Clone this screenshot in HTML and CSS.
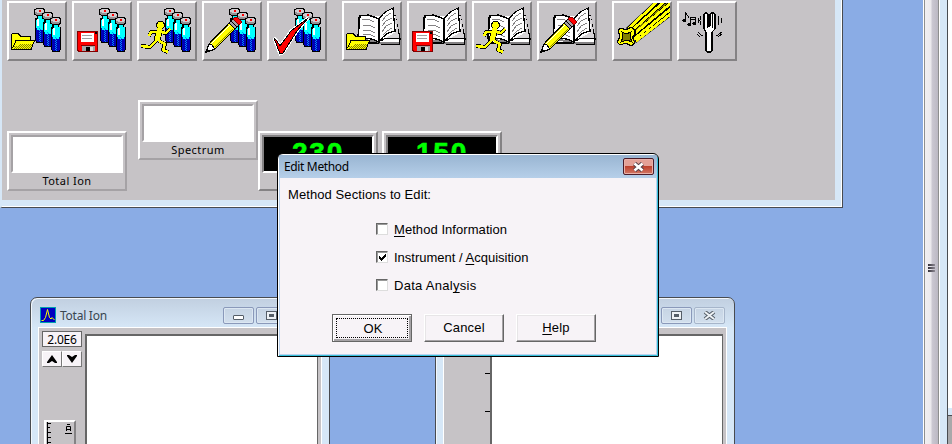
FILE: index.html
```html
<!DOCTYPE html>
<html lang="en">
<head>
<meta charset="utf-8">
<title>Edit Method</title>
<link rel="stylesheet" href="styles.css">
</head>
<body>
<svg class="defs" width="0" height="0" aria-hidden="true">
  <defs>
    <pattern id="dither" width="2" height="2" patternUnits="userSpaceOnUse"><rect width="2" height="2" fill="#ff0"/><rect width="1" height="1" fill="#848200"/><rect x="1" y="1" width="1" height="1" fill="#848200"/></pattern>
    <g id="vial">
      <path d="M3 8H9V10H11V33H10V35H2V33H1V10H3Z" fill="#000"/>
      <path d="M2 12H10V33H9V34H3V33H2Z" fill="#0000b8"/>
      <path d="M4 8H8V10H10V20H9V22H3V20H2V12H4Z" fill="#0ff"/>
      <path d="M3 11H5V18H3Z" fill="#fff"/>
      <path d="M5.500 20V33M6.500 21V34" fill="none" stroke="#08f" stroke-width="1" stroke-dasharray="1 1"/>
      <path d="M2 0H10V1H11V7H10V8H2V7H0V1H2Z" fill="#000"/>
      <path d="M2 1H9V2H10V6H9V7H2V6H1V2H2Z" fill="#949294"/>
      <path d="M3 1H9V2H10V4H9V5H3V4H1V2H3Z" fill="#d0cdd0"/>
      <rect x="5" y="2" width="2" height="2" fill="#f00"/>
    </g>
    <g id="vials"><use href="#vial" x="27" y="7"/><use href="#vial" x="35" y="11"/><use href="#vial" x="43" y="16"/></g>
    <g id="book">
      <path d="M17 16L16 36L17 42H37L40 43H57L58 38L53 14" fill="#fff" stroke="#000" stroke-width="1.300"/>
      <path d="M18 39L34 40L38 42H57" fill="none" stroke="#848284" stroke-width="2"/>
      <path d="M18 15L26 14L32 16L37 18V41L30 38L16 37Z" fill="#fff" stroke="#000" stroke-width="1.300"/>
      <path d="M37 18L41 13L45 10L51 7L53 30L46 32L41 36L37 41Z" fill="#fff" stroke="#000" stroke-width="1.300"/>
      <path d="M53 15H54L57 37L42 38L54 31Z" fill="#d6d3d6"/>
      <path d="M57 37L42 38L39 40" fill="none" stroke="#000"/>
      <path d="M20 19L26 18L32 21M21 24L27 24L33 27M21 29L27 29L33 32M21 33L27 33L33 36M40 20L44 15L49 12M40 25L44 20L50 17M40 31L44 25L50 22M41 34L45 30L50 27" fill="none" stroke="#848284"/>
    </g>
    <g id="folder">
      <path d="M4.500 48.500V33.500L6 32.500H11L14 35.500H23.500V39.500H27.500L24 48.500Z" fill="#ff0" stroke="#000"/>
      <path d="M9 39.500H27L24 48.500H6Z" fill="url(#dither)"/>
      <path d="M9 39H27L26 43H14L8 46Z" fill="#ff0"/>
      <path d="M5.500 47L9 39.500H27.500L24 48.500H5" fill="none" stroke="#000"/>
    </g>
    <g id="floppy">
      <path d="M5.500 30.500H25.500V50.500H7L5.500 49Z" fill="#f00" stroke="#800000"/>
      <rect x="9" y="32" width="13" height="9" fill="#fff"/><path d="M10 34.500H20M10 37.500H20" stroke="#a0a0a0"/>
      <rect x="10" y="45" width="13" height="5" fill="#a5a2a5"/><rect x="14" y="46" width="4" height="4" fill="#000"/><rect x="18" y="46" width="3" height="4" fill="#ddd"/>
      <rect x="23" y="31" width="2" height="2" fill="#000"/><path d="M9 44.500H23" stroke="#800000"/>
    </g>
    <g id="runner" fill="none" stroke-linejoin="round">
      <g stroke="#000" stroke-width="4"><path d="M22 30L20 40" stroke-width="7"/><path d="M20 31L14 31L12 35M24 31L29 32L33 28M20 39L13 46L4 45M22 40L28 43L26 49L31 51"/><circle cx="23.500" cy="24" r="2.500"/></g>
      <g stroke="#ff0" stroke-width="2.500"><path d="M22 27V31L20 40" stroke-width="5"/><path d="M20 31L14 31L12 35M24 31L29 32L33 28M20 39L13 46L4 45M22 40L28 43L26 49L31 51"/><circle cx="23.500" cy="24" r="2" fill="#ff0" stroke-width="2.500"/></g>
    </g>
    <g id="pencil">
      <path d="M4 51L7 43L27 22L33 28L13 48Z" fill="#ff0" stroke="#000" stroke-width="1.300"/>
      <path d="M4 51L7 43L9 43L13 48Z" fill="#fff" stroke="#000"/>
      <path d="M4 51L5 48L8 50Z" fill="#000"/>
      <path d="M13 46L31 28" stroke="#848200" stroke-width="1"/><path d="M9 43L28 24" stroke="#fff"/>
      <path d="M27 22L31 18L37 24L33 28Z" fill="#a5a2a5" stroke="#000"/><path d="M29 20L35 26" stroke="#000"/>
      <path d="M31 18L33 16H35L39 20V22L37 24Z" fill="#f00" stroke="#800000"/>
    </g>
    <g id="check"><path d="M7 37L10 40L13 45L24 30L41 17L30 30L16 52L13 53Z" fill="#f00" stroke="#fff" stroke-width="3"/><path d="M7 37L10 40L13 45L24 30L41 17L30 30L16 52L13 53Z" fill="#f00" stroke="#000"/></g>
    <clipPath id="rodclip"><path d="M14 27L41 2H58V16L24 42Z"/></clipPath>
    <g id="rods">
      <g clip-path="url(#rodclip)">
        <rect width="60" height="60" fill="#000"/>
        <g stroke="#ff0" stroke-width="2.800" fill="none"><path d="M16 28L46 0M17 32L54 -1M20 34.500L60 1M22 38L60 7M24 40L60 12"/></g>
        <path d="M18 34L56 1" stroke="#848200"/>
      </g>
      <path d="M6 29L9 27L14 29L19 26L23 29V33L20 36L23 42L19 45L14 42L8 44L5 41L8 36Z" fill="#ff0" stroke="#000" stroke-width="1.200"/>
      <path d="M10 31L14 33L19 31L18 36L20 41L15 39L9 41L11 36Z" fill="#848200" stroke="#000"/>
    </g>
    <g id="fork">
      <path d="M28 13L29 12H31L32 13V25L33 26L34 25V13L35 12H38L39 13V28L36 31V50L35 51H31L30 50V31L28 28Z" fill="#fff" stroke="#000" stroke-width="1.300"/>
      <path d="M31 13V27M36 13V27" stroke="#000"/>
      <path d="M25 15Q23 20 25 24M22 17V22M42 15Q44 20 42 24M45 17V22M22 31L25 34H27M21 33L24 36M46 31L42 34H40M46 33L42 36" stroke="#000" fill="none"/>
      <path d="M9.500 19V12L12 15V17M14.500 23V16.500H19.500V22M14.500 18H19" stroke="#000" fill="none"/>
      <ellipse cx="8.500" cy="19.500" rx="2" ry="1.500"/><ellipse cx="13.500" cy="23.500" rx="2" ry="1.500"/><ellipse cx="18.500" cy="22.500" rx="2" ry="1.500"/>
    </g>
  </defs>
</svg>
<div class="desktop">
  <section class="main-window">
    <div class="toolbar">
      <button class="tool"><svg><use href="#vials"/><use href="#folder"/></svg></button>
      <button class="tool"><svg><use href="#vials"/><use href="#floppy"/></svg></button>
      <button class="tool"><svg><use href="#vials"/><use href="#runner"/></svg></button>
      <button class="tool"><svg><use href="#vials"/><use href="#pencil"/></svg></button>
      <button class="tool"><svg><use href="#vials"/><use href="#check"/></svg></button>
      <button class="tool apart"><svg><use href="#book"/><use href="#folder"/></svg></button>
      <button class="tool"><svg><use href="#book"/><use href="#floppy"/></svg></button>
      <button class="tool"><svg><use href="#book"/><use href="#runner"/></svg></button>
      <button class="tool"><svg><use href="#book"/><use href="#pencil"/></svg></button>
      <button class="tool apart"><svg><use href="#rods"/></svg></button>
      <button class="tool"><svg><use href="#fork" x="-1"/></svg></button>
    </div>
    <div class="panels">
      <div class="panel low"><div class="screen"></div><span>Total Ion</span></div>
      <div class="panel spectrum"><div class="screen"></div><span>Spectrum</span></div>
      <div class="panel meter low"><div class="screen">230</div></div>
      <div class="panel meter low second"><div class="screen">150</div></div>
    </div>
  </section>

  <section class="child ion">
    <header class="child-title">
      <svg class="app-icon" width="16" height="16"><rect x=".5" y=".5" width="15" height="15" fill="#0000c0" stroke="#00a0b0"/><path d="M1.500 13.500H3.500L5.500 10.500L7.500 2.500L9.500 10.500L11 12L12 10.500L14.500 13" fill="none" stroke="#ff0"/></svg>
      <span class="name">Total Ion</span>
      <span class="cap"><i class="min"></i></span><span class="cap"><i class="max"></i></span><span class="cap"></span>
    </header>
    <div class="child-body">
      <aside class="side">
        <div class="scale">2.0E6</div>
        <div class="arrows">
          <button><svg width="12" height="8"><path d="M6 0L11 7V8H9L6 6L3 8H1V7Z"/></svg></button>
          <button><svg width="12" height="8"><path d="M6 8L1 1V0H3L6 2L9 0H11V1Z"/></svg></button>
        </div>
        <div class="gauge"><svg width="28" height="24"><path d="M1.500 0V24M2 1.500H5M2 5.500H4M2 10.500H5M2 15.500H5M2 20.500H5" fill="none" stroke="#000"/><path d="M20.500 9V4.500H24.500V9M19 11.500H26M20 7.500H25M21 2.500H24" fill="none" stroke="#000"/></svg></div>
      </aside>
      <div class="plot"></div>
    </div>
  </section>

  <section class="child spec">
    <header class="child-title"><span class="name"></span><span class="cap"><i class="max"></i></span><span class="cap closed"><svg width="13" height="9"><path d="M2 1L11 8M11 1L2 8" stroke="#555e68" stroke-width="4"/><path d="M2 1L11 8M11 1L2 8" stroke="#edf1f5" stroke-width="2"/></svg></span></header>
    <div class="child-body"><aside class="ticks"><i></i><i></i></aside><div class="plot"></div></div>
  </section>

  <div class="edge"><div class="scroll"><div class="grip"><i></i><i></i><i></i></div></div><div class="frame"></div><div class="outside"><div class="white"></div><div class="foot"></div></div></div>

  <section class="dialog">
    <header class="dialog-title"><span>Edit Method</span><button class="close"><svg width="13" height="10"><path d="M2.500 1.500L10.500 8.500M10.500 1.500L2.500 8.500" stroke="#56424a" stroke-width="4.500"/><path d="M2.500 1.500L10.500 8.500M10.500 1.500L2.500 8.500" stroke="#fff" stroke-width="2.500"/></svg></button></header>
    <div class="dialog-body">
      <p class="prompt">Method Sections to Edit:</p>
      <div class="options">
        <label><span class="box"></span><span class="info"><u>M</u>ethod Information</span></label>
        <label><span class="box"><svg width="9" height="9"><path d="M1 3V6L3 8L8 3V0L3 5Z"/></svg></span><span>Instrument / <u>A</u>cquisition</span></label>
        <label><span class="box"></span><span class="data">Data Anal<u>y</u>sis</span></label>
      </div>
      <div class="actions"><button class="default"><span>OK</span></button><button>Cancel</button><button><span><u>H</u>elp</span></button></div>
    </div>
  </section>
</div>
</body>
</html>
```
FILE: styles.css
```css
* { box-sizing: border-box; }
body { margin: 0; overflow: hidden; }
button { padding: 0; margin: 0; border-radius: 0; color: #000; font: inherit; }
.defs { position: absolute; }
.desktop { position: relative; width: 952px; height: 444px; overflow: hidden; background: #8aace5; font: 11px "Noto Sans", sans-serif; color: #000; }

.main-window { position: absolute; left: 0; top: 0; width: 843px; height: 208px; background: #c6c3c6; border-left: 2px solid #d6e7f7; border-right: 1px solid #484b50; border-bottom: 1px solid #484b50; box-shadow: inset -1px -1px #fff, inset -7px -7px #d6e7f7; }
.toolbar { display: flex; gap: 5px; padding: 1px 0 0 5px; }
.tool { width: 60px; height: 60px; border: 2px solid; border-color: #fff #848284 #848284 #fff; background: #c6c3c6; }
.tool svg { display: block; width: 60px; height: 60px; margin: -2px; shape-rendering: crispEdges; }
.tool.apart { margin-left: 10px; }
.panels { display: flex; padding: 39px 0 0 5px; }
.panel { width: 120px; height: 60px; padding: 2px 2px 0; border: 2px solid; border-color: #fff #a5a2a5 #a5a2a5 #fff; text-align: center; line-height: 14px; font-size: 11px; }
.panel .screen { width: 112px; height: 38px; background: #fff; border: 2px solid; border-color: #a5a2a5 #fff #fff #a5a2a5; }
.panel span { display: block; letter-spacing: .45px; margin-top: 1px; }
.panel.low { margin-top: 31px; }
.spectrum { margin-left: 11px; }
.panel.meter { border-color: #fff #848284 #848284 #fff; }
.meter.second { margin-left: 4px; }
.panel.meter .screen { background: #000; border-color: #848284 #fff #fff #848284; color: #0f0; font: bold 28px/31px "Liberation Sans", sans-serif; letter-spacing: 1.8px; -webkit-text-stroke: .6px #0f0; }

.child { position: absolute; top: 297px; height: 160px; padding: 0 7px; border: 1px solid #484b50; border-radius: 7px 7px 0 0; background: #d6e7f7; background-image: linear-gradient(#c1cfe0, #d6e7f7 30px); box-shadow: inset 1px 1px #f2f7fc; display: flex; flex-direction: column; }
.ion { left: 30px; width: 300px; }
.spec { left: 435px; width: 300px; }
.child-title { display: flex; height: 29px; padding: 9px 2px 0 2px; gap: 2px; flex: none; }
.name { flex: 1; margin-left: 2px; color: #394650; font-size: 12px; line-height: 17px; letter-spacing: -.25px; }
.cap { width: 31px; height: 17px; border: 1px solid #8a99ba; border-radius: 2px; box-shadow: inset 0 0 0 1px #dce7f2; background: linear-gradient(#c6d4e4, #d2dfed); display: grid; place-items: center; }
.cap.closed { border-color: #a6b5ca; }
.min { width: 11px; height: 5px; margin-top: 4px; border: 1px solid #555e68; border-radius: 1px; background: #fff; }
.max { width: 11px; height: 9px; border: 1px solid #555e68; background: linear-gradient(#555e68, #555e68) center/5px 3px no-repeat, #edf1f5; }
.child-body { flex: 1; display: flex; background: #c6c3c6; border: 1px solid #fff; border-bottom: 0; padding-top: 6px; }
.side { width: 46px; padding: 0 0 0 3px; }
.scale { margin-top: -3px; width: 40px; height: 16px; border: 1px solid #666; background: #f7f3f7; font: 12px/16px "Noto Sans", sans-serif; letter-spacing: -.2px; text-align: center; }
.arrows { display: flex; margin-top: 4px; }
.arrows button { width: 20px; height: 16px; border: 1px solid; border-color: #fff #777 #777 #fff; background: #f7f3f7; display: grid; place-items: center; }
.gauge { margin: 53px 0 0 2px; width: 32px; height: 30px; border: 2px solid; border-color: #fff #848284 #848284 #fff; }
.gauge svg { display: block; }
.plot { flex: 1; background: #fff; border: 2px solid; border-color: #666 #666 #fff #666; border-width: 2px 1px 0 2px; margin-right: 3px; }
.ticks { width: 46px; padding-top: 39px; display: flex; flex-direction: column; align-items: flex-end; gap: 37px; }
.ticks i { width: 5px; height: 1px; background: #000; }

.edge { position: absolute; left: 923px; top: 0; width: 29px; height: 444px; display: flex; }
.scroll { width: 17px; border: solid #fff; border-width: 0 1px; padding-top: 264px; background: linear-gradient(90deg, #8e8f8f 1px, #f1f0f2 1px, #ebe9ed 7px, #cbc8d2 8px, #bbb8c3 14px, #8e8f8f 14px); }
.grip { display: grid; gap: 1px; margin-left: 4px; }
.grip i { width: 7px; height: 2px; background: linear-gradient(90deg, #333039, #8d8993); }
.frame { width: 8px; background: #d6e7f7; border-right: 1px solid #484b50; }
.outside { flex: 1; display: flex; flex-direction: column; }
.white { height: 408px; background: #fff; }
.foot { flex: 1; border-top: 7px solid #d6e7f7; background: linear-gradient(#484b50 1px, #a9a8aa 1px); }

.dialog { position: absolute; left: 277px; top: 153px; width: 382px; height: 204px; border: 1px solid #000; border-radius: 6px 6px 0 0; background: #f7f3f7; box-shadow: inset 1px 1px #fff, inset -1px -1px #36bfd8, inset 2px 0 #bad2ef, inset -2px -2px #bad2ef; overflow: hidden; }
.dialog-title { height: 23px; margin: 1px 1px 0; padding: 3px 3px 0 5px; display: flex; justify-content: space-between; background: linear-gradient(#99b5d2, #b6cfe9); line-height: 18px; font-size: 12px; letter-spacing: -.35px; }
.close { width: 31px; height: 17px; border: 1px solid #4b1c29; border-radius: 2px; box-shadow: inset 0 0 0 1px #e9b0a8; background: linear-gradient(#e4a197 0 45%, #bd3f2b 48%, #d27765); display: grid; place-items: center; }
.dialog-body { font: 13px/16px "Liberation Sans", sans-serif; padding: 9px 10px 0; }
.prompt { margin: 0; letter-spacing: .09px; }
.options { display: grid; gap: 12px; margin: 19px 0 0 88px; }
.options label { display: flex; gap: 6px; height: 16px; }
.info { letter-spacing: .06px; }
.data { letter-spacing: .28px; }
.box { width: 12px; height: 12px; margin-top: 1px; background: #fff; border: 1px solid; border-color: #666 #ddd #ddd #666; box-shadow: inset 1px 1px #999; }
.box svg { display: block; margin: 1px; shape-rendering: crispEdges; }
u { text-decoration: underline; text-underline-offset: 2px; text-decoration-thickness: 1px; text-decoration-skip-ink: none; }
.actions { display: flex; gap: 12px; margin: 20px 0 0 44px; }
.actions button { width: 80px; height: 28px; border: 1px solid; border-color: #fff #666 #666 #fff; box-shadow: inset -1px -1px #a5a2a5, inset 1px 1px #e7e5e7; background: #f7f3f7; letter-spacing: .15px; }
.actions .default { border-color: #666; padding: 3px; box-shadow: inset 1px 1px #fff, inset -2px -2px #a5a2a5; }
.default span { display: block; width: 72px; height: 20px; padding-left: 2px; line-height: 19px; border: 1px dotted #000; }
```
